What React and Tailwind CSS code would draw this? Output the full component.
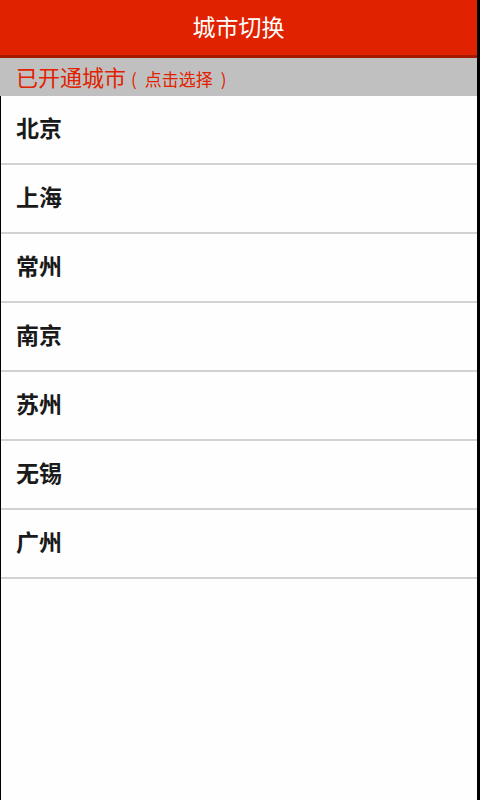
export default function App() {
  const cities = ["北京", "上海", "常州", "南京", "苏州", "无锡", "广州"];
  const font = { fontFamily: '"Noto Sans CJK SC", "Noto Sans", sans-serif' };
  return (
    <div className="flex h-[800px] w-[480px] bg-black" style={font}>
      <div className="flex w-[477px] flex-col bg-white">
        <div className="flex h-[58px] items-center justify-center border-b-[3px] border-[#a41a00] bg-[#e02200] pb-[2px] text-[23px] text-white">
          城市切换
        </div>
        <div className="flex h-[38px] items-center bg-[#c0c0c0] pb-[2px] pl-[16px] text-[#e02200]">
          <div className="flex items-baseline">
            <span className="text-[22px] leading-none">已开通城市</span>
            <span className="ml-[5px] text-[17px] leading-none">(</span>
            <span className="ml-[8px] text-[17px] leading-none">点击选择</span>
            <span className="ml-[8px] text-[17px] leading-none">)</span>
          </div>
        </div>
        <div className="flex flex-1 flex-col border-l border-black bg-[#fefefe]">
          {cities.map((c) => (
            <div
              key={c}
              className="flex h-[69px] items-center border-b-2 border-[#d2d2d2] pb-[4px] pl-[15px] pr-px text-[23px] font-bold text-[#1a1a1a]"
            >
              {c}
            </div>
          ))}
        </div>
      </div>
      <div className="w-[3px]" />
    </div>
  );
}
